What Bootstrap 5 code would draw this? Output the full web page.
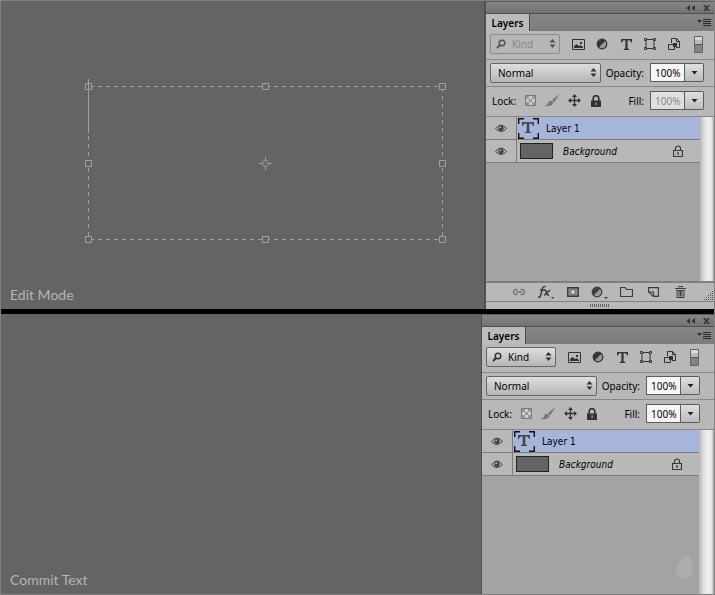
<!DOCTYPE html>
<html lang="en">
<head>
<meta charset="utf-8">
<meta name="viewport" content="width=device-width, initial-scale=1">
<title>Layers panel: edit and commit text</title>
<link href="https://cdn.jsdelivr.net/npm/bootstrap@5.3.0/dist/css/bootstrap.min.css" rel="stylesheet">
<style>
  body { background: #646464; color: #000; font: 10px/14px "Noto Sans", "Open Sans", sans-serif; }
  svg { display: block; flex: none; }
  .frame { border: 1px solid #808080; }
  .stage-split { height: 5px; background: #000; }
  .canvas { background: #646464; min-width: 0; }
  .caption { font: 14px/18px Lato, "Open Sans", sans-serif; color: #b4b4b4; padding: 0 9px 5px; }
  .transform-box { margin: 77px 0 0 83px; }
  .panel { border-left: 2px solid #505050; background: #b8b8b8; }
  .panel-edit { width: 230px; }
  .panel-commit { width: 233px; border-left-width: 1px; }
  .titlebar { height: 13px; gap: 8px; padding-right: 4px; background: linear-gradient(#868686, #727272); border-bottom: 1px solid #4f4f4f; border-top: 1px solid #5c5c5c; color: #333; }
  .tabbar { height: 17px; background: linear-gradient(#868686, #7c7c7c); }
  .tabbar .tab { width: 44px; background: #bbb; border-right: 1px solid #4a4a4a; font-weight: 600; }
  .tabbar .menu { padding-right: 3px; color: #2c2c2c; }
  .plain { border: 0; background: none; padding: 0; color: inherit; display: flex; align-items: center; justify-content: center; }
  .tool-row { border-bottom: 1px solid #888; padding-left: 4px; color: #333; }
  .filter-row { height: 29px; gap: 6px; padding-bottom: 2px; }
  .blend-row { height: 27px; padding-bottom: 1px; }
  .lock-row { height: 30px; padding-bottom: 2px; }
  .tool-row label, .tool-row .lock-label { color: #000; }
  .tool { width: 24px; height: 22px; }
  .lock-tool { width: 22px; height: 20px; }
  .lock-label { width: 29px; padding-left: 2px; }
  .pick { position: relative; height: 20px; }
  .pick select { appearance: none; width: 100%; height: 100%; border: 1px solid #666; border-radius: 2px; background: linear-gradient(#dedede, #b6b6b6); padding: 0 7px; color: #000; line-height: 14px; }
  .pick svg { position: absolute; top: 5px; pointer-events: none; }
  .pick .updown { right: 4px; }
  .pick .lens { left: 6px; }
  .pick-kind { width: 70px; }
  .pick-kind select { padding-left: 21px; }
  .pick select:disabled { background: #b6b6b6; border-color: #8c8c8c; color: #888; opacity: 1; }
  .pick-kind select:disabled ~ svg { color: #555; }
  .pick-blend { width: 111px; }
  .amount-label { width: 43px; text-align: right; }
  .fill-label { width: 37px; }
  .amount { width: 54px; height: 19px; margin-left: 6px; }
  .amount input { width: 35px; border: 1px solid #5c5c5c; border-radius: 0; background: #f6f6f6; padding: 0 0 0 4px; color: #000; line-height: 14px; }
  .amount input:disabled { background: #e0e0e0; color: #888; }
  .amount button { width: 19px; border: 1px solid #5c5c5c; border-left: 0; border-radius: 0 2px 2px 0; background: linear-gradient(#e0e0e0, #bcbcbc); color: #222; }
  .stack { background: #a3a3a3; min-width: 0; }
  .stack-edit { min-height: 164px; }
  .layer-row { height: 23px; background: #b8b8b8; border-bottom: 1px solid #7c7c7c; font-family: "DejaVu Sans Condensed", "DejaVu Sans", sans-serif; font-stretch: condensed; }
  .layer-row.current { background: #a6b5da; }
  .layer-name { padding-top: 2px; }
  .eye { width: 31px; height: 22px; border-right: 1px solid #7c7c7c; background: #b8b8b8; color: #444; }
  .type-thumb { margin: 0 7px 0 1px; }
  .fill-thumb { width: 33px; height: 16px; margin: 0 10px 0 3px; background: #646464; border: 1px solid #222; }
  .row-lock { margin-right: 17px; color: #3a3a3a; }
  .track { width: 14px; background: linear-gradient(90deg, #b5b5b5, #dedede 30%, #f0f0f0 60%, #e4e4e4 85%, #a0a0a0); }
  .panel-commit .track { width: 15px; }
  .footbar { height: 20px; border-top: 2px solid #808080; padding: 0 0 0 19px; color: #3c3c3c; }
  .footbar .tool { width: 27px; height: 18px; }
  .grip { height: 8px; border-top: 1px solid #808080; }
  .bird { position: absolute; right: 19px; bottom: 14px; }
</style>
</head>
<body>
<svg width="0" height="0" class="position-absolute" aria-hidden="true">
  <symbol id="collapse" viewBox="0 0 9 6"><path d="M4 0v6L.500 3zM9 0v6L5.500 3z" fill="currentColor"/></symbol>
  <symbol id="close" viewBox="0 0 7 6"><path d="M0 0h2l1.500 1.700L5 0h2L4.500 3 7 6H5L3.500 4.300 2 6H0l2.500-3z" fill="currentColor"/></symbol>
  <symbol id="menu" viewBox="0 0 14 8"><path d="M0 1h5L2.500 4zM6 0h8v1H6zM6 2h8v1H6zM6 4h8v1H6zM6 6h8v1H6z" fill="currentColor"/></symbol>
  <symbol id="lens" viewBox="0 0 10 10"><circle cx="6" cy="4" r="2.800" fill="none" stroke="currentColor" stroke-width="1.500"/><path d="M3.800 6.200L1 9" stroke="currentColor" stroke-width="2"/></symbol>
  <symbol id="updown" viewBox="0 0 7 9"><path d="M.500 3.500h6L3.500 0zM.500 5.500h6L3.500 9z" fill="currentColor"/></symbol>
  <symbol id="down" viewBox="0 0 7 4"><path d="M.500 0h6L3.500 3.500z" fill="currentColor"/></symbol>
  <symbol id="image" viewBox="0 0 13 11"><path d="M.5.5h12v10H.5z" fill="none" stroke="currentColor"/><path d="M2 9V7l2.500-2L7 7l1.500-1L11 8v1z" fill="currentColor"/><path d="M8 3h2v2H8z" fill="currentColor"/></symbol>
  <symbol id="adjust" viewBox="0 0 12 12"><circle cx="6" cy="6" r="4.800" fill="#999" stroke="currentColor" stroke-width="1.200"/><path d="M9.500 2.500A5 5 0 0 0 2.500 9.500z" fill="currentColor"/></symbol>
  <symbol id="type" viewBox="0 0 11 11"><path d="M0 0h11v3.500h-1Q9.700 1.300 8 1.300H6.600V9q0 1 1.700 1v1H2.700v-1q1.700 0 1.700-1V1.300H3Q1.300 1.300 1 3.500H0z" fill="currentColor"/></symbol>
  <symbol id="shape" viewBox="0 0 12 12"><path d="M2 2v8M10 2v8M2 1.500h8M2 10.500h8" fill="none" stroke="currentColor"/><path d="M.5.5h2v2h-2zM9.500.5h2v2h-2zM.500 9.500h2v2h-2zM9.500 9.500h2v2h-2z" fill="#bbb" stroke="currentColor"/></symbol>
  <symbol id="smart" viewBox="0 0 12 12"><path d="M3.500 5V.5h5l3 3v6H8M8.500.5v3h3" fill="none" stroke="currentColor"/><path d="M.500 6.500h6v5h-6z" fill="none" stroke="currentColor"/><path d="M5 5h4v4H5z" fill="currentColor"/></symbol>
  <symbol id="toggle" viewBox="0 0 9 17"><path d="M.5.5h8v16h-8z" fill="#838383" stroke="#666"/><path d="M1 1h7v3H1z" fill="#d8d8d8"/><path d="M1 4h7v4H1z" fill="#bcbcbc"/><path d="M1 8.500h7" stroke="#555"/></symbol>
  <symbol id="checker" viewBox="0 0 11 11"><path d="M.5.5h10v10H.5z" fill="#ccc" stroke="#777"/><path d="M1 1h3v3H1zM7 1h3v3H7zM4 4h3v3H4zM1 7h3v3H1zM7 7h3v3H7z" fill="#999"/></symbol>
  <symbol id="brush" viewBox="0 0 16 13"><path d="M15.500 0L8 6l2 2.500zM7.300 6.500L9.500 9Q7.500 13 0 12q3.500-.5 4-3 .8-2.500 3.300-2.500z" fill="#777"/></symbol>
  <symbol id="move" viewBox="0 0 13 13"><path d="M6.500 2v9M2 6.500h9" stroke="currentColor" stroke-width="1.300"/><path d="M6.500 0L9 3H4zM6.500 13L9 10H4zM0 6.500L3 4v5zM13 6.500L10 4v5z" fill="currentColor"/></symbol>
  <symbol id="padlock" viewBox="0 0 10 12"><path d="M2.200 6V3.500a2.800 2.800 0 0 1 5.600 0V6" fill="none" stroke="currentColor" stroke-width="1.600"/><path d="M0 5.500h10V12H0z" fill="currentColor"/><path d="M4.500 7.500h1.200v2.500H4.500z" fill="#aaa"/></symbol>
  <symbol id="padlock-open" viewBox="0 0 10 12"><path d="M2.500 5.500v-2a2.500 2.500 0 0 1 5 0v2M.500 5.500h9v6h-9z" fill="none" stroke="currentColor" stroke-width="1.200"/><path d="M4.300 7.300h1.500v2.400H4.300z" fill="currentColor"/></symbol>
  <symbol id="eye" viewBox="0 0 12 9"><path d="M.5 4.500Q6-2.500 11.500 4.500 6 10.500 .5 4.500z" fill="#bbb" stroke="currentColor"/><circle cx="6" cy="4.200" r="2.700" fill="currentColor"/><circle cx="5.200" cy="3.400" r=".8" fill="#ccc"/></symbol>
  <symbol id="type-layer" viewBox="0 0 21 21"><path d="M.7 6V.7H6M15 .7h5.300V6M20.300 15v5.300H15M6 20.300H.7V15" fill="none" stroke="#111" stroke-width="1.400"/><path d="M4 4h12v4h-1Q14.500 5.500 13 5.500h-1.700V13q0 1 1.700 1v1H7v-1q1.700 0 1.700-1V5.500H7Q5.500 5.500 5 8H4z" fill="#484848"/></symbol>
  <symbol id="link" viewBox="0 0 14 8"><path d="M5.500 1.500H4a2.500 2.500 0 0 0 0 5h1.500M8.500 1.500H10a2.500 2.500 0 0 1 0 5H8.500M4 4h6" fill="none" stroke="#777" stroke-width="1.400"/></symbol>
  <symbol id="fx" viewBox="0 0 18 14"><path d="M1 12q2 .8 2.600-1.500L5.400 3.500Q6 1 8.500 1.600M3 5h4.500M7.500 5q1.500 0 2 2.500t2.500 3M13 5L7 10.500" fill="none" stroke="currentColor" stroke-width="1.500"/><path d="M14 12h3l-1.500 2z" fill="currentColor"/></symbol>
  <symbol id="mask" viewBox="0 0 12 10"><path d="M.7.7h10.600v8.600H.7z" fill="#8c8c8c" stroke="currentColor" stroke-width="1.400"/><circle cx="6" cy="5" r="2.300" fill="#ddd" stroke="currentColor" stroke-width=".6"/></symbol>
  <symbol id="folder" viewBox="0 0 13 10"><path d="M.5 9.500v-9h4.500l1.500 2h6v7z" fill="none" stroke="currentColor" stroke-width="1.200"/></symbol>
  <symbol id="new-layer" viewBox="0 0 11 10"><path d="M.6 5V.6h9.800v8.800H5.500L.6 5h4.900v4.400" fill="none" stroke="currentColor" stroke-width="1.200"/></symbol>
  <symbol id="trash" viewBox="0 0 11 12"><path d="M3.500 1.500V.500h4v1M0 2.500h11M1.500 4.500h8M2 4v7.500h7V4M4 4.500v6M5.500 4.500v6M7 4.500v6" fill="none" stroke="currentColor"/></symbol>
</svg>

<main class="frame min-vh-100 d-flex flex-column">
  <section class="d-flex">
    <div class="canvas flex-grow-1 d-flex flex-column justify-content-between">
      <svg class="transform-box" width="364" height="168" viewBox="84 78 364 168" fill="none" stroke="#a0a0a0" aria-hidden="true">
        <path d="M90 86.500H442.500M90 239.500H442.500M88.500 136V239M442.500 88V239" stroke-dasharray="4 4"/>
        <path d="M88.500 79v54"/>
        <path d="M85.500 83.500h6v6h-6zM262.500 83.500h6v6h-6zM439.500 83.500h6v6h-6zM85.500 160.500h6v6h-6zM439.500 160.500h6v6h-6zM85.500 236.500h6v6h-6zM262.500 236.500h6v6h-6zM439.500 236.500h6v6h-6z" fill="#646464"/>
        <path d="M88.500 83v7M265.500 157v4M265.500 166v4M259 163.500h4M268 163.500h4"/>
        <circle cx="265.500" cy="163.500" r="3"/><path d="M265 163.500h1"/>
      </svg>
      <div class="caption">Edit Mode</div>
    </div>
    <aside class="panel panel-edit flex-shrink-0">
      <div class="titlebar d-flex align-items-center justify-content-end">
        <button class="plain" aria-label="Collapse"><svg width="9" height="6"><use href="#collapse"/></svg></button>
        <button class="plain" aria-label="Close"><svg width="7" height="6"><use href="#close"/></svg></button>
      </div>
      <div class="tabbar d-flex justify-content-between">
        <button class="plain tab">Layers</button>
        <button class="plain menu" aria-label="Panel menu"><svg width="14" height="8"><use href="#menu"/></svg></button>
      </div>
      <div class="tool-row filter-row d-flex align-items-center">
        <div class="pick pick-kind"><select aria-label="Filter type" disabled><option>Kind</option></select><svg class="lens" width="10" height="10"><use href="#lens"/></svg><svg class="updown" width="7" height="9"><use href="#updown"/></svg></div>
        <div class="d-flex">
          <button class="plain tool" aria-label="Pixel layers"><svg width="13" height="11"><use href="#image"/></svg></button>
          <button class="plain tool" aria-label="Adjustment layers"><svg width="12" height="12"><use href="#adjust"/></svg></button>
          <button class="plain tool" aria-label="Type layers"><svg width="11" height="11"><use href="#type"/></svg></button>
          <button class="plain tool" aria-label="Shape layers"><svg width="12" height="12"><use href="#shape"/></svg></button>
          <button class="plain tool" aria-label="Smart objects"><svg width="12" height="12"><use href="#smart"/></svg></button>
          <button class="plain tool" aria-label="Toggle filter"><svg width="9" height="17"><use href="#toggle"/></svg></button>
        </div>
      </div>
      <div class="tool-row blend-row d-flex align-items-center">
        <div class="pick pick-blend"><select aria-label="Blend mode"><option>Normal</option></select><svg class="updown" width="7" height="9"><use href="#updown"/></svg></div>
        <label class="amount-label" for="op1">Opacity:</label>
        <div class="amount d-flex"><input id="op1" type="text" value="100%"><button class="plain" aria-label="Opacity slider"><svg width="7" height="4"><use href="#down"/></svg></button></div>
      </div>
      <div class="tool-row lock-row d-flex align-items-center">
        <span class="lock-label">Lock:</span>
        <button class="plain lock-tool" aria-label="Lock transparency"><svg width="11" height="11"><use href="#checker"/></svg></button>
        <button class="plain lock-tool" aria-label="Lock pixels"><svg width="16" height="13"><use href="#brush"/></svg></button>
        <button class="plain lock-tool" aria-label="Lock position"><svg width="13" height="13"><use href="#move"/></svg></button>
        <button class="plain lock-tool" aria-label="Lock all"><svg width="10" height="12"><use href="#padlock"/></svg></button>
        <label class="amount-label fill-label" for="fill1">Fill:</label>
        <div class="amount d-flex"><input id="fill1" type="text" value="100%" disabled><button class="plain" aria-label="Fill slider"><svg width="7" height="4"><use href="#down"/></svg></button></div>
      </div>
      <div class="d-flex">
        <div class="stack stack-edit flex-grow-1">
          <div class="layer-row current d-flex align-items-center">
            <button class="plain eye" aria-label="Hide Layer 1"><svg width="12" height="9"><use href="#eye"/></svg></button>
            <svg class="type-thumb" width="21" height="21"><use href="#type-layer"/></svg>
            <span class="layer-name">Layer 1</span>
          </div>
          <div class="layer-row d-flex align-items-center">
            <button class="plain eye" aria-label="Hide Background"><svg width="12" height="9"><use href="#eye"/></svg></button>
            <span class="fill-thumb"></span>
            <em class="layer-name flex-grow-1">Background</em>
            <svg class="row-lock" width="10" height="12"><use href="#padlock-open"/></svg>
          </div>
        </div>
        <div class="track"></div>
      </div>
      <div class="footbar d-flex align-items-center">
        <button class="plain tool" aria-label="Link layers"><svg width="14" height="8"><use href="#link"/></svg></button>
        <button class="plain tool" aria-label="Layer style"><svg width="18" height="14"><use href="#fx"/></svg></button>
        <button class="plain tool" aria-label="Add mask"><svg width="12" height="10"><use href="#mask"/></svg></button>
        <button class="plain tool" aria-label="New adjustment layer"><svg width="12" height="12"><use href="#adjust"/></svg><svg width="5" height="14" viewBox="0 0 5 14"><path d="M1 12h4l-2 2z" fill="currentColor"/></svg></button>
        <button class="plain tool" aria-label="New group"><svg width="13" height="10"><use href="#folder"/></svg></button>
        <button class="plain tool" aria-label="New layer"><svg width="11" height="10"><use href="#new-layer"/></svg></button>
        <button class="plain tool" aria-label="Delete layer"><svg width="11" height="12"><use href="#trash"/></svg></button>
        <svg class="ms-auto align-self-end" width="10" height="11" viewBox="0 0 10 11"><path d="M8 1.500h1M6 3.500h3M4 5.500h5M2 7.500h7M0 9.500h9" stroke="#555" stroke-dasharray="1 1"/></svg>
      </div>
      <div class="grip d-flex align-items-center justify-content-center"><svg width="20" height="3" viewBox="0 0 20 3"><path d="M0 1.500h20" stroke="#666" stroke-width="3" stroke-dasharray="1 1"/></svg></div>
    </aside>
  </section>

  <div class="stage-split"></div>

  <section class="d-flex flex-grow-1">
    <div class="canvas flex-grow-1 d-flex flex-column justify-content-end">
      <div class="caption">Commit Text</div>
    </div>
    <aside class="panel panel-commit flex-shrink-0 d-flex flex-column position-relative">
      <div class="titlebar d-flex align-items-center justify-content-end">
        <button class="plain" aria-label="Collapse"><svg width="9" height="6"><use href="#collapse"/></svg></button>
        <button class="plain" aria-label="Close"><svg width="7" height="6"><use href="#close"/></svg></button>
      </div>
      <div class="tabbar d-flex justify-content-between">
        <button class="plain tab">Layers</button>
        <button class="plain menu" aria-label="Panel menu"><svg width="14" height="8"><use href="#menu"/></svg></button>
      </div>
      <div class="tool-row filter-row d-flex align-items-center">
        <div class="pick pick-kind"><select aria-label="Filter type"><option>Kind</option></select><svg class="lens" width="10" height="10"><use href="#lens"/></svg><svg class="updown" width="7" height="9"><use href="#updown"/></svg></div>
        <div class="d-flex">
          <button class="plain tool" aria-label="Pixel layers"><svg width="13" height="11"><use href="#image"/></svg></button>
          <button class="plain tool" aria-label="Adjustment layers"><svg width="12" height="12"><use href="#adjust"/></svg></button>
          <button class="plain tool" aria-label="Type layers"><svg width="11" height="11"><use href="#type"/></svg></button>
          <button class="plain tool" aria-label="Shape layers"><svg width="12" height="12"><use href="#shape"/></svg></button>
          <button class="plain tool" aria-label="Smart objects"><svg width="12" height="12"><use href="#smart"/></svg></button>
          <button class="plain tool" aria-label="Toggle filter"><svg width="9" height="17"><use href="#toggle"/></svg></button>
        </div>
      </div>
      <div class="tool-row blend-row d-flex align-items-center">
        <div class="pick pick-blend"><select aria-label="Blend mode"><option>Normal</option></select><svg class="updown" width="7" height="9"><use href="#updown"/></svg></div>
        <label class="amount-label" for="op2">Opacity:</label>
        <div class="amount d-flex"><input id="op2" type="text" value="100%"><button class="plain" aria-label="Opacity slider"><svg width="7" height="4"><use href="#down"/></svg></button></div>
      </div>
      <div class="tool-row lock-row d-flex align-items-center">
        <span class="lock-label">Lock:</span>
        <button class="plain lock-tool" aria-label="Lock transparency"><svg width="11" height="11"><use href="#checker"/></svg></button>
        <button class="plain lock-tool" aria-label="Lock pixels"><svg width="16" height="13"><use href="#brush"/></svg></button>
        <button class="plain lock-tool" aria-label="Lock position"><svg width="13" height="13"><use href="#move"/></svg></button>
        <button class="plain lock-tool" aria-label="Lock all"><svg width="10" height="12"><use href="#padlock"/></svg></button>
        <label class="amount-label fill-label" for="fill2">Fill:</label>
        <div class="amount d-flex"><input id="fill2" type="text" value="100%"><button class="plain" aria-label="Fill slider"><svg width="7" height="4"><use href="#down"/></svg></button></div>
      </div>
      <div class="d-flex flex-grow-1">
        <div class="stack flex-grow-1">
          <div class="layer-row current d-flex align-items-center">
            <button class="plain eye" aria-label="Hide Layer 1"><svg width="12" height="9"><use href="#eye"/></svg></button>
            <svg class="type-thumb" width="21" height="21"><use href="#type-layer"/></svg>
            <span class="layer-name">Layer 1</span>
          </div>
          <div class="layer-row d-flex align-items-center">
            <button class="plain eye" aria-label="Hide Background"><svg width="12" height="9"><use href="#eye"/></svg></button>
            <span class="fill-thumb"></span>
            <em class="layer-name flex-grow-1">Background</em>
            <svg class="row-lock" width="10" height="12"><use href="#padlock-open"/></svg>
          </div>
        </div>
        <div class="track"></div>
      </div>
      <svg class="bird" width="20" height="26" viewBox="0 0 20 26" aria-hidden="true"><path d="M6 7Q7 1 12 1q3 1 3 4l4 2-2 4q2 11-4 13-7 2-11-3Q-1 12 6 7z" fill="#adadad"/></svg>
    </aside>
  </section>
</main>
<script src="https://cdn.jsdelivr.net/npm/bootstrap@5.3.0/dist/js/bootstrap.bundle.min.js"></script>
</body>
</html>
